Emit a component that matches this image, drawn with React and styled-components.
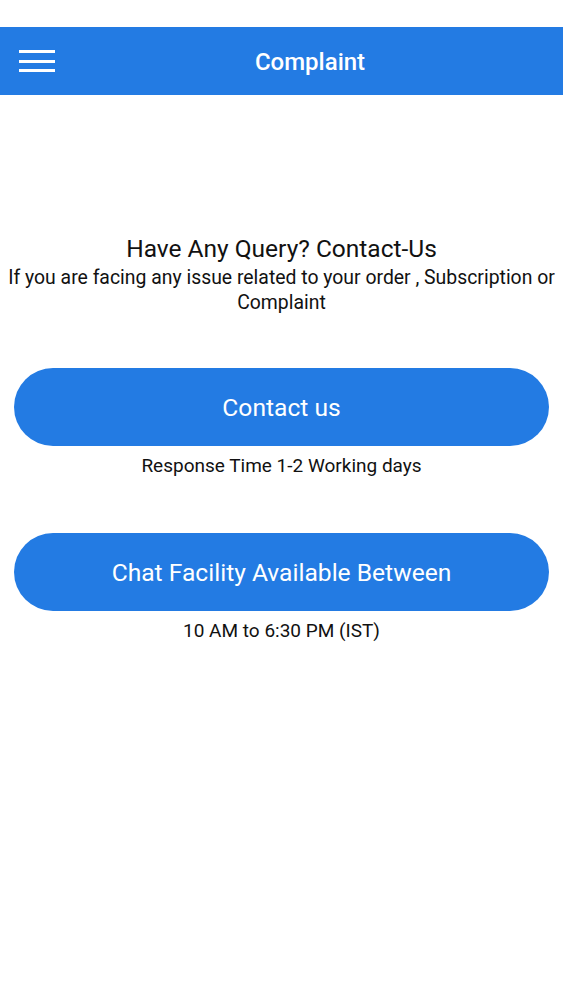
import React from "react";
import styled, { createGlobalStyle } from "styled-components";

const Global = createGlobalStyle`
  body {
    margin: 0;
    background: #fff;
    font-family: Roboto, "Liberation Sans", sans-serif;
  }
`;

const Page = styled.div`
  width: 563px;
  min-height: 1000px;
  background: #fff;
`;

const StatusBar = styled.div`
  height: 27px;
`;

const Header = styled.header`
  position: relative;
  height: 68px;
  padding-left: 57px;
  background: #237be3;
  display: flex;
  align-items: center;
  justify-content: center;
`;

const MenuButton = styled.button`
  position: absolute;
  left: 19px;
  top: 23px;
  width: 36px;
  height: 22px;
  padding: 0;
  border: 0;
  background: transparent;
  display: flex;
  flex-direction: column;
  justify-content: space-between;
  cursor: pointer;
`;

const MenuLine = styled.span`
  display: block;
  height: 3px;
  background: #fff;
`;

const Title = styled.h1`
  margin: 0;
  color: #fff;
  font-size: 24px;
  font-weight: 500;
  line-height: 30px;
  transform: translateY(1px);
`;

const Content = styled.main`
  display: flex;
  flex-direction: column;
  align-items: center;
  padding: 139px 14px 0;
  text-align: center;
  color: #111;
`;

const Heading = styled.h2`
  margin: 0;
  font-size: 24.5px;
  font-weight: 400;
  line-height: 30px;
`;

const Lead = styled.p`
  margin: 0 -14px;
  font-size: 19.4px;
  line-height: 25px;
  transform: translateY(1px);
`;

const Pill = styled.button`
  width: 100%;
  height: 78px;
  margin-top: ${({ $top }) => $top}px;
  border: 0;
  border-radius: 39px;
  background: #237be3;
  color: #fff;
  font-family: inherit;
  font-size: 24.6px;
  cursor: pointer;
`;

const Note = styled.p`
  margin: 8px 0 0;
  font-size: 19px;
  line-height: 24px;
`;

export default function App() {
  return (
    <Page>
      <Global />
      <StatusBar />
      <Header>
        <MenuButton aria-label="Menu">
          <MenuLine />
          <MenuLine />
          <MenuLine />
        </MenuButton>
        <Title>Complaint</Title>
      </Header>
      <Content>
        <Heading>Have Any Query? Contact-Us</Heading>
        <Lead>
          If you are facing any issue related to your order , Subscription or
          Complaint
        </Lead>
        <Pill $top={54}>Contact us</Pill>
        <Note>Response Time 1-2 Working days</Note>
        <Pill $top={55}>Chat Facility Available Between</Pill>
        <Note>10 AM to 6:30 PM (IST)</Note>
      </Content>
    </Page>
  );
}
